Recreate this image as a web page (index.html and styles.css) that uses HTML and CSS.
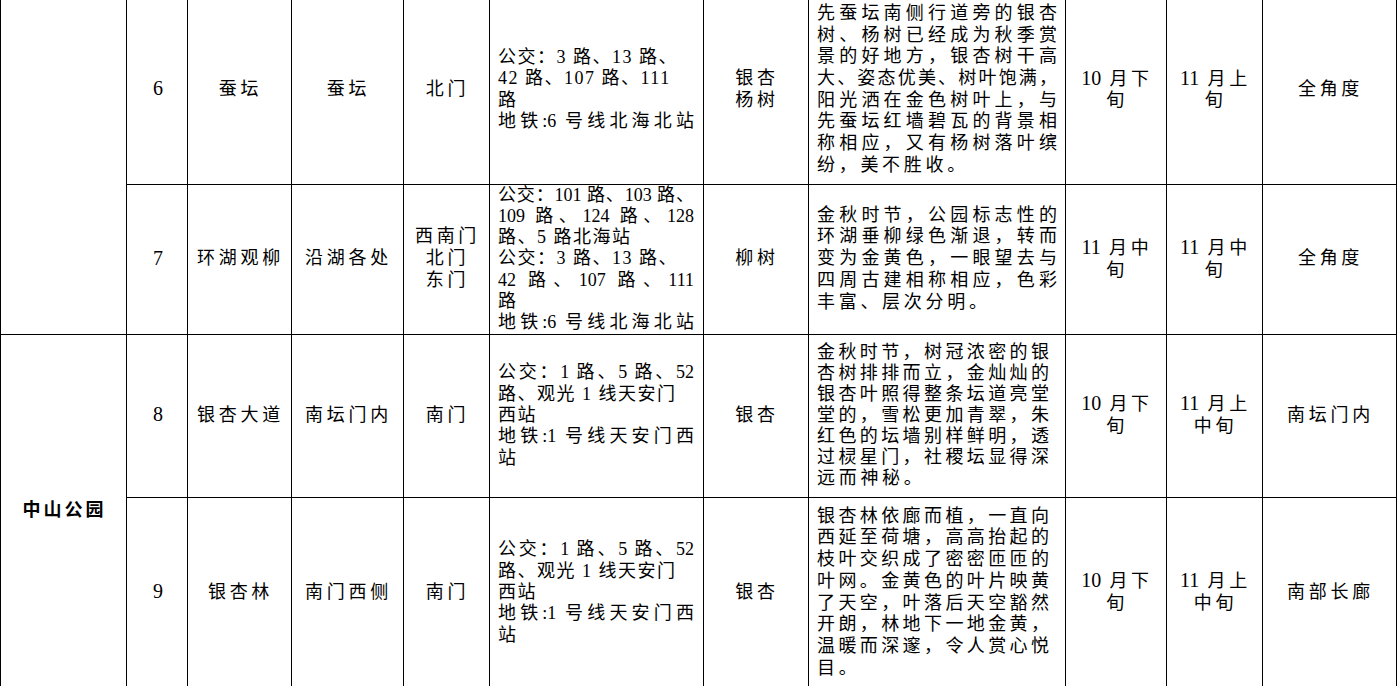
FILE: index.html
```html
<!DOCTYPE html>
<html lang="zh-CN">
<head>
<meta charset="utf-8">
<title>公园赏秋景点</title>
<link rel="stylesheet" href="styles.css">
</head>
<body>
<table class="spots">
  <colgroup>
    <col class="c-park"><col class="c-no"><col class="c-name"><col class="c-place"><col class="c-gate"><col class="c-bus"><col class="c-tree"><col class="c-desc"><col class="c-start"><col class="c-end"><col class="c-view">
  </colgroup>
  <tbody>
    <tr class="r6">
      <td class="park" rowspan="2"></td>
      <td><span class="n">6</span></td>
      <td>蚕坛</td>
      <td>蚕坛</td>
      <td>北门</td>
      <td class="bus">
        <span class="ln">公交：3 路、13 路、</span>
        <span class="ln">42 路、107 路、111</span>
        <span class="ln">路</span>
        <span class="ln j">地铁:6 号线北海北站</span>
      </td>
      <td>银杏<br>杨树</td>
      <td class="desc">
        <span class="ln j">先蚕坛南侧行道旁的银杏</span>
        <span class="ln j">树、杨树已经成为秋季赏</span>
        <span class="ln j">景的好地方，银杏树干高</span>
        <span class="ln j">大、姿态优美、树叶饱满，</span>
        <span class="ln j">阳光洒在金色树叶上，与</span>
        <span class="ln j">先蚕坛红墙碧瓦的背景相</span>
        <span class="ln j">称相应，又有杨树落叶缤</span>
        <span class="ln">纷，美不胜收。</span>
      </td>
      <td><span class="n">10</span> 月下<br>旬</td>
      <td><span class="n">11</span> 月上<br>旬</td>
      <td>全角度</td>
    </tr>
    <tr class="r7">
      <td><span class="n">7</span></td>
      <td>环湖观柳</td>
      <td>沿湖各处</td>
      <td>西南门<br>北门<br>东门</td>
      <td class="bus">
        <span class="ln j">公交：101 路、103 路、</span>
        <span class="ln j">109 路、124 路、128</span>
        <span class="ln">路、5 路北海站</span>
        <span class="ln">公交：3 路、13 路、</span>
        <span class="ln j">42 路、107 路、111</span>
        <span class="ln">路</span>
        <span class="ln j">地铁:6 号线北海北站</span>
      </td>
      <td>柳树</td>
      <td class="desc">
        <span class="ln j">金秋时节，公园标志性的</span>
        <span class="ln j">环湖垂柳绿色渐退，转而</span>
        <span class="ln j">变为金黄色，一眼望去与</span>
        <span class="ln j">四周古建相称相应，色彩</span>
        <span class="ln">丰富、层次分明。</span>
      </td>
      <td><span class="n">11</span> 月中<br>旬</td>
      <td><span class="n">11</span> 月中<br>旬</td>
      <td>全角度</td>
    </tr>
    <tr class="r8">
      <td class="park" rowspan="2">中山公园</td>
      <td><span class="n">8</span></td>
      <td>银杏大道</td>
      <td>南坛门内</td>
      <td>南门</td>
      <td class="bus">
        <span class="ln j">公交：1 路、5 路、52</span>
        <span class="ln">路、观光 1 线天安门</span>
        <span class="ln">西站</span>
        <span class="ln j">地铁:1 号线天安门西</span>
        <span class="ln">站</span>
      </td>
      <td>银杏</td>
      <td class="desc narrow">
        <span class="ln j">金秋时节，树冠浓密的银</span>
        <span class="ln j">杏树排排而立，金灿灿的</span>
        <span class="ln j">银杏叶照得整条坛道亮堂</span>
        <span class="ln j">堂的，雪松更加青翠，朱</span>
        <span class="ln j">红色的坛墙别样鲜明，透</span>
        <span class="ln j">过棂星门，社稷坛显得深</span>
        <span class="ln">远而神秘。</span>
      </td>
      <td><span class="n">10</span> 月下<br>旬</td>
      <td><span class="n">11</span> 月上<br>中旬</td>
      <td>南坛门内</td>
    </tr>
    <tr class="r9">
      <td><span class="n">9</span></td>
      <td>银杏林</td>
      <td>南门西侧</td>
      <td>南门</td>
      <td class="bus">
        <span class="ln j">公交：1 路、5 路、52</span>
        <span class="ln">路、观光 1 线天安门</span>
        <span class="ln">西站</span>
        <span class="ln j">地铁:1 号线天安门西</span>
        <span class="ln">站</span>
      </td>
      <td>银杏</td>
      <td class="desc narrow">
        <span class="ln j">银杏林依廊而植，一直向</span>
        <span class="ln j">西延至荷塘，高高抬起的</span>
        <span class="ln j">枝叶交织成了密密匝匝的</span>
        <span class="ln j">叶网。金黄色的叶片映黄</span>
        <span class="ln j">了天空，叶落后天空豁然</span>
        <span class="ln j">开朗，林地下一地金黄，</span>
        <span class="ln j">温暖而深邃，令人赏心悦</span>
        <span class="ln">目。</span>
      </td>
      <td><span class="n">10</span> 月下<br>旬</td>
      <td><span class="n">11</span> 月上<br>中旬</td>
      <td>南部长廊</td>
    </tr>
  </tbody>
</table>
</body>
</html>
```

FILE: styles.css
```css
body {
  margin: 0;
  background: #fff;
  color: #000;
  font-family: "Liberation Serif", "Noto Sans CJK SC", serif;
  font-size: 18px;
  line-height: 21.7px;
}

.spots {
  border-collapse: collapse;
  table-layout: fixed;
  width: 1397px;
}

.c-park { width: 126px; }
.c-no { width: 61px; }
.c-name { width: 104px; }
.c-place { width: 112px; }
.c-gate { width: 86px; }
.c-bus { width: 214px; }
.c-tree { width: 105px; }
.c-desc { width: 257px; }
.c-start { width: 101px; }
.c-end { width: 96px; }
.c-view { width: 134px; }

.spots td {
  border: 1px solid #000;
  padding: 0 2px 0 4px;
  text-align: center;
  vertical-align: middle;
  letter-spacing: 3.7px;
  overflow: hidden;
}

.spots tr.r6 td {
  border-top: none;
  padding-bottom: 4px;
}

.r6 { height: 184px; }
.r7 { height: 150px; }
.r8 { height: 163px; }
.r9 { height: 191px; }

.n {
  letter-spacing: 0;
  font-size: 20px;
}

.spots td.park {
  font-weight: bold;
  letter-spacing: 3px;
}

.spots td.bus {
  text-align: left;
  padding-left: 8px;
  padding-right: 9px;
  letter-spacing: 1.5px;
  line-height: 21.3px;
}

.spots td.desc {
  text-align: left;
  padding-left: 8px;
  padding-right: 8px;
  letter-spacing: 3.7px;
}

.spots td.desc.narrow { padding-right: 16px; }

.spots tr.r8 td.desc { line-height: 21px; }

.ln {
  display: block;
  white-space: nowrap;
}

.ln.j {
  white-space: normal;
  text-align: justify;
  text-align-last: justify;
  letter-spacing: 0;
}
```
